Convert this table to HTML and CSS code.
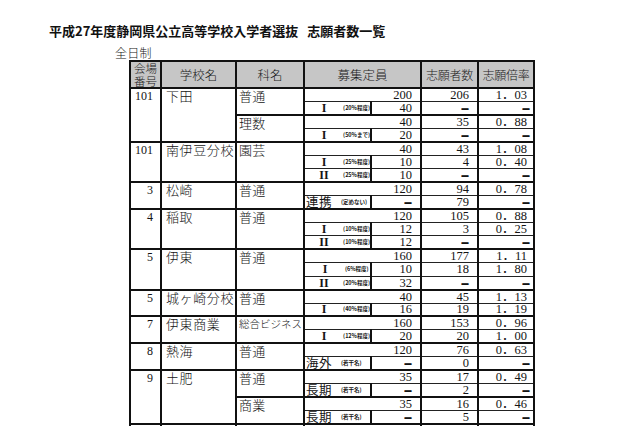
FILE: index.html
```html
<!DOCTYPE html>
<html lang="ja">
<head>
<meta charset="utf-8">
<title>志願者数一覧</title>
<link rel="stylesheet" href="styles.css">
</head>
<body>
<div class="page">
  <h1 class="title">平成27年度静岡県公立高等学校入学者選抜 <span class="t2">志願者数一覧</span></h1>
  <div class="sub">全日制</div>
  <table class="tbl">
    <colgroup>
      <col class="c1"><col class="c2"><col class="c3"><col class="c4"><col class="c5"><col class="c6"><col class="c7">
    </colgroup>
    <thead>
      <tr>
        <th class="hno">会場<br>番号</th>
        <th>学校名</th>
        <th>科名</th>
        <th colspan="2">募集定員</th>
        <th class="hsm">志願者数</th>
        <th class="hsm">志願倍率</th>
      </tr>
    </thead>
    <tbody>
      <tr class="m g">
        <td class="no" rowspan="4">101</td><td class="sc" rowspan="4">下田</td><td class="ka" rowspan="2">普通</td>
        <td class="lab"></td><td class="n">200</td><td class="n">206</td><td class="r">1．03</td>
      </tr>
      <tr>
        <td class="lab"><div class="lb"><span class="k">I</span><span class="s">(20%程度)</span></div></td><td class="n">40</td><td class="n"><span class="d">—</span></td><td class="r"><span class="d">—</span></td>
      </tr>
      <tr class="m g">
        <td class="ka" rowspan="2">理数</td>
        <td class="lab"></td><td class="n">40</td><td class="n">35</td><td class="r">0．88</td>
      </tr>
      <tr>
        <td class="lab"><div class="lb"><span class="k">I</span><span class="s">(50%まで)</span></div></td><td class="n">20</td><td class="n"><span class="d">—</span></td><td class="r"><span class="d">—</span></td>
      </tr>

      <tr class="m g">
        <td class="no" rowspan="3">101</td><td class="sc" rowspan="3">南伊豆分校</td><td class="ka" rowspan="3">園芸</td>
        <td class="lab"></td><td class="n">40</td><td class="n">43</td><td class="r">1．08</td>
      </tr>
      <tr>
        <td class="lab"><div class="lb"><span class="k">I</span><span class="s">(25%程度)</span></div></td><td class="n">10</td><td class="n">4</td><td class="r">0．40</td>
      </tr>
      <tr>
        <td class="lab"><div class="lb"><span class="k">II</span><span class="s">(25%程度)</span></div></td><td class="n">10</td><td class="n"><span class="d">—</span></td><td class="r"><span class="d">—</span></td>
      </tr>

      <tr class="m g">
        <td class="no" rowspan="2">3</td><td class="sc" rowspan="2">松崎</td><td class="ka" rowspan="2">普通</td>
        <td class="lab"></td><td class="n">120</td><td class="n">94</td><td class="r">0．78</td>
      </tr>
      <tr>
        <td class="lab"><div class="lb"><span class="w">連携</span><span class="s">(定めない)</span></div></td><td class="n"><span class="d">—</span></td><td class="n">79</td><td class="r"><span class="d">—</span></td>
      </tr>

      <tr class="m g">
        <td class="no" rowspan="3">4</td><td class="sc" rowspan="3">稲取</td><td class="ka" rowspan="3">普通</td>
        <td class="lab"></td><td class="n">120</td><td class="n">105</td><td class="r">0．88</td>
      </tr>
      <tr>
        <td class="lab"><div class="lb"><span class="k">I</span><span class="s">(10%程度)</span></div></td><td class="n">12</td><td class="n">3</td><td class="r">0．25</td>
      </tr>
      <tr>
        <td class="lab"><div class="lb"><span class="k">II</span><span class="s">(10%程度)</span></div></td><td class="n">12</td><td class="n"><span class="d">—</span></td><td class="r"><span class="d">—</span></td>
      </tr>

      <tr class="m g">
        <td class="no" rowspan="3">5</td><td class="sc" rowspan="3">伊東</td><td class="ka" rowspan="3">普通</td>
        <td class="lab"></td><td class="n">160</td><td class="n">177</td><td class="r">1．11</td>
      </tr>
      <tr>
        <td class="lab"><div class="lb"><span class="k">I</span><span class="s">(6%程度)</span></div></td><td class="n">10</td><td class="n">18</td><td class="r">1．80</td>
      </tr>
      <tr>
        <td class="lab"><div class="lb"><span class="k">II</span><span class="s">(20%程度)</span></div></td><td class="n">32</td><td class="n"><span class="d">—</span></td><td class="r"><span class="d">—</span></td>
      </tr>

      <tr class="m g">
        <td class="no" rowspan="2">5</td><td class="sc" rowspan="2">城ヶ崎分校</td><td class="ka" rowspan="2">普通</td>
        <td class="lab"></td><td class="n">40</td><td class="n">45</td><td class="r">1．13</td>
      </tr>
      <tr>
        <td class="lab"><div class="lb"><span class="k">I</span><span class="s">(40%程度)</span></div></td><td class="n">16</td><td class="n">19</td><td class="r">1．19</td>
      </tr>

      <tr class="m g">
        <td class="no" rowspan="2">7</td><td class="sc" rowspan="2">伊東商業</td><td class="ka kn" rowspan="2">総合ビジネス</td>
        <td class="lab"></td><td class="n">160</td><td class="n">153</td><td class="r">0．96</td>
      </tr>
      <tr>
        <td class="lab"><div class="lb"><span class="k">I</span><span class="s">(12%程度)</span></div></td><td class="n">20</td><td class="n">20</td><td class="r">1．00</td>
      </tr>

      <tr class="m g">
        <td class="no" rowspan="2">8</td><td class="sc" rowspan="2">熱海</td><td class="ka" rowspan="2">普通</td>
        <td class="lab"></td><td class="n">120</td><td class="n">76</td><td class="r">0．63</td>
      </tr>
      <tr>
        <td class="lab"><div class="lb"><span class="w">海外</span><span class="s">(若干名)</span></div></td><td class="n"><span class="d">—</span></td><td class="n">0</td><td class="r"><span class="d">—</span></td>
      </tr>

      <tr class="m g">
        <td class="no" rowspan="4">9</td><td class="sc" rowspan="4">土肥</td><td class="ka" rowspan="2">普通</td>
        <td class="lab"></td><td class="n">35</td><td class="n">17</td><td class="r">0．49</td>
      </tr>
      <tr>
        <td class="lab"><div class="lb"><span class="w">長期</span><span class="s">(若干名)</span></div></td><td class="n"><span class="d">—</span></td><td class="n">2</td><td class="r"><span class="d">—</span></td>
      </tr>
      <tr class="m g">
        <td class="ka" rowspan="2">商業</td>
        <td class="lab"></td><td class="n">35</td><td class="n">16</td><td class="r">0．46</td>
      </tr>
      <tr>
        <td class="lab"><div class="lb"><span class="w">長期</span><span class="s">(若干名)</span></div></td><td class="n"><span class="d">—</span></td><td class="n">5</td><td class="r"><span class="d">—</span></td>
      </tr>

      <tr class="m g">
        <td class="no"></td><td class="sc"></td><td class="ka"></td>
        <td class="lab"></td><td class="n"></td><td class="n"></td><td class="r"></td>
      </tr>
    </tbody>
  </table>
</div>
</body>
</html>
```

FILE: styles.css
```css
html, body {
  margin: 0;
  padding: 0;
  background: #ffffff;
}

body {
  width: 640px;
  height: 426px;
  overflow: hidden;
  color: #141414;
  font-family: "Liberation Serif", "Noto Sans CJK JP", serif;
}

.page {
  padding-top: 23px;
}

.title {
  margin: 0 0 0 49px;
  font-family: "Noto Sans CJK JP", sans-serif;
  font-size: 13px;
  line-height: 16px;
  font-weight: bold;
  color: #111;
  letter-spacing: 0;
}

.title .t2 {
  margin-left: 6px;
}

.sub {
  margin: 7px 0 0 115px;
  font-size: 12px;
  line-height: 13px;
  font-family: "Noto Sans CJK JP", serif;
  font-weight: 300;
  letter-spacing: 0.2px;
}

.tbl {
  margin: 1px 0 0 129px;
  border-collapse: collapse;
  table-layout: fixed;
  width: 404px;
  border: 2px solid #111;
}

.c1 { width: 31px; }
.c2 { width: 75px; }
.c3 { width: 68px; }
.c4 { width: 67px; }
.c5 { width: 50px; }
.c6 { width: 57px; }
.c7 { width: 56px; }

.tbl th {
  height: 24px;
  padding: 0;
  background: #c6c6c6;
  border: 2px solid #111;
  font-family: "Noto Sans CJK JP", serif;
  font-weight: 300;
  font-size: 12.5px;
  line-height: 13px;
  text-align: center;
  vertical-align: middle;
  color: #1a1a1a;
}

.tbl th.hno {
  font-size: 11.5px;
  line-height: 12.5px;
  letter-spacing: 0;
}

.tbl th.hsm {
  font-size: 12px;
  letter-spacing: -0.3px;
}

.tbl tr {
  height: 13.45px;
}

.tbl td {
  padding: 0;
  border: 1px solid #222;
  font-size: 12.5px;
  line-height: 10px;
  white-space: nowrap;
}

.tbl tr.g > td {
  border-top: 2px solid #111;
}

.tbl td.no,
.tbl td.sc,
.tbl td.ka,
.tbl td.lab,
.tbl td.n,
.tbl td.r {
  border-left: 2px solid #111;
}

.tbl tr.m td.lab {
  border-right: none;
}

.tbl tr.m td.lab + td.n {
  border-left: none;
}

.tbl td.no {
  vertical-align: top;
  text-align: right;
  padding: 2px 7px 0 0;
  font-size: 12px;
}

.tbl td.sc,
.tbl td.ka {
  vertical-align: top;
  text-align: left;
  font-family: "Noto Sans CJK JP", serif;
  font-weight: 300;
  font-size: 13px;
  padding-top: 2px;
}

.tbl td.sc {
  padding-left: 4px;
  letter-spacing: 0.6px;
}

.tbl td.ka {
  padding-left: 2px;
  letter-spacing: 0.3px;
}

.tbl td.ka.kn {
  font-size: 10.5px;
  letter-spacing: 0;
}

.tbl td.n,
.tbl td.r {
  text-align: right;
  vertical-align: middle;
}

.tbl td.n {
  padding-right: 8px;
}

.tbl td.r {
  padding-right: 6px;
}

.tbl td.lab {
  vertical-align: middle;
}

.lb {
  display: flex;
  align-items: center;
  height: 10px;
}

.lb .k {
  width: 40px;
  text-align: center;
  font-size: 12px;
  line-height: 10px;
  font-weight: bold;
}

.lb .w {
  width: 35px;
  padding-left: 1px;
  font-family: "Noto Sans CJK JP", serif;
  font-size: 12.5px;
  line-height: 10px;
  font-weight: 400;
  letter-spacing: 0.5px;
}

.lb .s {
  font-family: "Noto Sans CJK JP", sans-serif;
  font-size: 5.5px;
  line-height: 8px;
  font-weight: bold;
  white-space: nowrap;
}

.d {
  display: inline-block;
  font-family: "DejaVu Sans", sans-serif;
  font-size: 8px;
  font-weight: bold;
  line-height: 8px;
  vertical-align: middle;
  transform: scaleY(1.8);
}

.r .d {
  margin-right: -3px;
}
```
